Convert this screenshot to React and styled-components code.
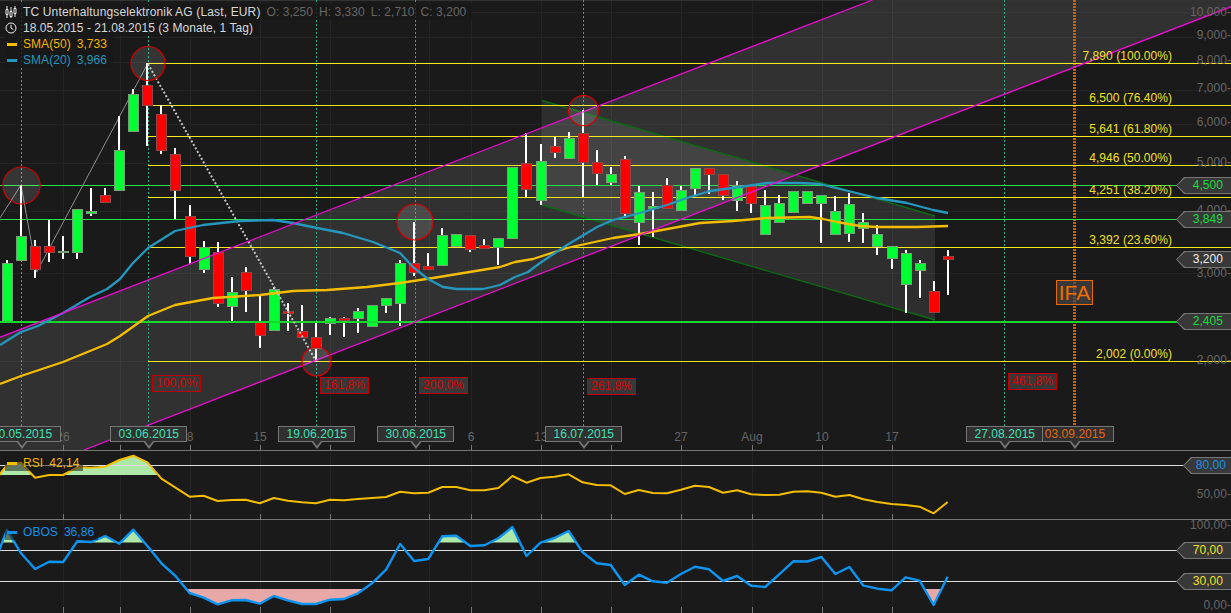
import styled, { createGlobalStyle } from "styled-components";

const GlobalStyle = createGlobalStyle`
  html, body {
    margin: 0;
    padding: 0;
    background: #1a1a1a;
  }
`;

const Chart = styled.div`
  width: 1231px;
  height: 613px;
  display: flex;
  flex-direction: column;
  overflow: hidden;
  background: #1a1a1a;
  font-family: "Liberation Sans", Arial, sans-serif;
  font-size: 12px;
  letter-spacing: 0.05px;
`;

const Pane = styled.section`
  position: relative;
  flex: none;
  box-sizing: border-box;
  height: ${(p) => p.$height}px;
  border-bottom: ${(p) => (p.$last ? "none" : "1px solid #777")};
`;

const PaneSvg = styled.svg`
  display: block;
`;

const Band = styled.polygon`
  fill: rgba(255, 255, 255, ${(p) => p.$alpha});
`;

const Rule = styled.line`
  stroke: ${(p) => p.$color};
  stroke-width: ${(p) => p.$width || 1}px;
  shape-rendering: crispEdges;
`;

const Stripe = styled.line`
  stroke: ${(p) => p.$color};
  stroke-width: ${(p) => p.$width}px;
  stroke-dasharray: ${(p) => p.$dash};
  shape-rendering: crispEdges;
`;

const Trend = styled.polyline`
  fill: none;
  stroke: ${(p) => p.$color};
  stroke-width: ${(p) => p.$width}px;
  stroke-linejoin: round;
  stroke-dasharray: ${(p) => p.$dash || "none"};
`;

const Marker = styled.circle`
  fill: rgba(255, 255, 255, 0.12);
  stroke: #d40000;
  stroke-width: 1.2;
`;

const Wick = styled.line`
  stroke: #fff;
  stroke-width: 2px;
  shape-rendering: crispEdges;
`;

const Body = styled.rect`
  fill: ${(p) => (p.$up ? "#00ff33" : "#ff0000")};
  stroke: ${(p) => (p.$up ? "#76a076" : "#8f4646")};
  stroke-width: 1px;
  shape-rendering: crispEdges;
`;

const Legend = styled.div`
  position: absolute;
  left: 5px;
  top: 4px;
  display: flex;
  flex-direction: column;
  align-items: flex-start;
`;

const LegendRow = styled.div`
  display: flex;
  align-items: center;
  height: 16px;
  gap: 6px;
  padding-right: 6px;
  background: rgba(24, 24, 24, 0.8);
  color: ${(p) => p.$color || "#d8d8d8"};
  white-space: nowrap;
`;

const LegendIcon = styled.svg`
  flex: none;
  width: 12px;
  height: 12px;
`;

const Swatch = styled.i`
  flex: none;
  width: 10px;
  height: 3px;
  margin: 0 0 0 2px;
  background: ${(p) => p.$color};
`;

const Title = styled.span`
  letter-spacing: 0.15px;
`;

const Ohlc = styled.span`
  color: #666;
`;

const PaneLegend = styled(LegendRow)`
  position: absolute;
  left: 5px;
  top: 4px;
  background: rgba(26, 26, 26, 0.55);
  padding-right: 4px;
  gap: 6px;
`;

const AxisLabel = styled.span`
  position: absolute;
  right: 0;
  top: ${(p) => p.$y}px;
  transform: translateY(-50%);
  color: #666;
  line-height: 14px;
`;

const TimeLabel = styled.span`
  position: absolute;
  left: ${(p) => p.$x}px;
  top: 430px;
  transform: translateX(-50%);
  color: #666;
  line-height: 14px;
`;

const FibLabel = styled.span`
  position: absolute;
  right: 59px;
  top: ${(p) => p.$y}px;
  transform: translateY(-50%);
  color: #f0e020;
  line-height: 14px;
  white-space: nowrap;
`;

const DateTag = styled.div`
  position: absolute;
  left: ${(p) => p.$x - 38}px;
  top: 426px;
  box-sizing: border-box;
  width: 77px;
  height: 16px;
  line-height: 14px;
  text-align: center;
  white-space: nowrap;
  border: 1px solid #777;
  background: #303030;
  color: ${(p) => p.$color};

  &::before,
  &::after {
    content: "";
    position: absolute;
    left: 50%;
    width: 0;
    height: 0;
    border-style: solid;
    border-color: transparent;
    border-bottom-width: 0;
  }
  &::before {
    top: 100%;
    margin-left: -6px;
    border-width: 8px 6px 0;
    border-top-color: #777;
  }
  &::after {
    top: 100%;
    margin-left: -4px;
    border-width: 5px 4px 0;
    border-top-color: #2c2c2c;
  }
`;

const ValueTag = styled.div`
  position: absolute;
  right: 0;
  top: ${(p) => p.$y - 8}px;
  box-sizing: border-box;
  width: ${(p) => p.$width}px;
  height: 17px;
  padding-right: ${(p) => p.$pad || 8}px;
  line-height: 17px;
  text-align: right;
  color: ${(p) => p.$color};
  background: #777;
  clip-path: polygon(8px 0, 100% 0, 100% 100%, 8px 100%, 0 50%);

  &::before {
    content: "";
    position: absolute;
    inset: 1px 0 1px 1px;
    background: #383838;
    clip-path: polygon(8px 0, 100% 0, 100% 100%, 8px 100%, 0 50%);
  }
`;

const ValueText = styled.span`
  position: relative;
`;

const PercentTag = styled.div`
  position: absolute;
  left: ${(p) => p.$x}px;
  top: ${(p) => p.$y}px;
  box-sizing: border-box;
  width: 49px;
  height: 17px;
  line-height: 14px;
  text-align: center;
  border: 1px solid #c00000;
  background: #383838;
  color: #dd0000;
`;

const IfaTag = styled.div`
  position: absolute;
  left: 1056px;
  top: 280px;
  box-sizing: border-box;
  width: 37px;
  height: 25px;
  line-height: 23px;
  text-align: center;
  border: 1px solid #e86a00;
  background: rgba(70, 70, 70, 0.7);
  color: #ee6e00;
  font-size: 21px;
  letter-spacing: 0;
`;

const WIDTH = 1231;
const barX = (i) => Math.round(7 + 14.04 * i);

const candles = [
  [260, 322, 263, 322, 1], [185, 260, 236, 260, 1], [240, 278, 246, 269, 0], [220, 262, 246, 252, 0],
  [236, 259, 251, 252, 1], [209, 259, 209, 252, 1], [188, 216, 211, 213, 1], [188, 203, 195, 202, 0],
  [116, 190, 150, 190, 1], [89, 131, 94, 131, 1], [63, 146, 85, 105, 0], [105, 154, 114, 150, 0],
  [148, 219, 154, 190, 0], [205, 264, 216, 256, 0], [241, 273, 247, 269, 1], [242, 307, 252, 303, 0],
  [277, 321, 292, 306, 1], [267, 312, 272, 290, 0], [296, 348, 322, 335, 0], [287, 330, 289, 330, 1],
  [303, 331, 311, 313, 0], [305, 337, 331, 337, 0], [322, 362, 337, 348, 0], [317, 335, 318, 323, 1],
  [317, 337, 318, 320, 0], [308, 333, 311, 318, 1], [305, 326, 305, 326, 1], [298, 313, 298, 305, 1],
  [260, 326, 263, 303, 1], [222, 276, 263, 272, 0], [253, 269, 266, 269, 0], [228, 265, 235, 265, 1],
  [234, 246, 234, 246, 1], [235, 252, 235, 249, 0], [239, 248, 245, 248, 0], [238, 265, 238, 247, 1],
  [167, 238, 167, 238, 1], [133, 197, 163, 189, 0], [144, 205, 161, 200, 1], [137, 158, 146, 152, 0],
  [132, 158, 138, 158, 1], [110, 197, 133, 162, 0], [150, 185, 162, 173, 0], [167, 185, 174, 182, 1],
  [156, 216, 159, 213, 0], [186, 245, 192, 222, 1], [192, 237, 206, 208, 1], [178, 208, 185, 208, 0],
  [186, 210, 190, 210, 1], [168, 195, 168, 188, 1], [168, 194, 168, 174, 0], [174, 200, 174, 195, 0],
  [181, 211, 185, 200, 1], [186, 213, 186, 203, 0], [190, 234, 205, 234, 1], [195, 222, 203, 222, 1],
  [191, 212, 191, 212, 1], [191, 203, 191, 203, 1], [195, 243, 195, 203, 1], [196, 234, 211, 234, 1],
  [193, 242, 204, 233, 1], [213, 243, 222, 228, 1], [225, 255, 234, 246, 1], [246, 269, 246, 258, 1],
  [250, 313, 253, 284, 1], [260, 298, 263, 270, 1], [281, 312, 291, 312, 0], [250, 295, 256, 259, 0],
];

const sma50 = "0,384 21,376 63,362 107,344 120,336 148,316 175,305 213,298 260,295 293,291 327,290 367,287 400,283 433,278 500,267 515,262 533,259 567,248 613,238 640,234 700,223 733,221 767,218 810,217 823,219 837,222 860,226 877,227 917,227 948,226";
const sma20 = "0,345 21,332 38,326 63,313 90,297 107,289 120,279 133,263 148,248 175,231 203,225 240,221 273,220 293,223 317,228 343,233 373,242 400,253 413,267 428,279 443,287 457,289 483,289 500,285 515,277 528,272 540,263 567,245 597,227 613,220 640,213 667,205 687,198 710,191 740,187 767,183 800,183 820,184 840,189 877,198 907,203 933,210 948,213";

const rsi = [
  465, 462.7, 477.7, 475, 475, 467.3, 467.7, 466.7, 460, 455.7, 462.3, 478.7, 487.7, 496.7, 495.7, 501, 500,
  499.7, 503.3, 498, 500.7, 502.3, 503.3, 499.7, 500.3, 499, 498, 497, 491.7, 493.3, 492.7, 487, 487, 490.3,
  490.3, 488, 476, 482.7, 478, 476.7, 474.3, 482.3, 485, 485.3, 494, 490, 493, 493.3, 489.7, 485.7, 487, 492.7,
  490.3, 494.3, 495, 494.7, 491.7, 491.3, 492.7, 496.7, 495, 499.3, 502, 504, 505, 506.7, 513.3, 502,
];

const obos = [
  530, 553.3, 569, 561.7, 562, 541.3, 542, 536, 543.7, 529.7, 546, 563.3, 576, 593, 597.7, 604.3, 600.3, 600,
  603.7, 596, 600.3, 604, 604, 599.7, 599, 593.3, 583.3, 569.7, 544, 561, 559, 536.3, 535.7, 546, 545.3, 538.3,
  527, 556, 542.7, 538, 531, 552.3, 563.3, 565, 585, 574.7, 581.3, 582.7, 574, 566.7, 569.3, 581, 576, 585.7,
  587, 574.3, 561.3, 561.5, 557, 574, 567, 585.7, 588.7, 590.3, 577.3, 580.7, 605, 576.7,
];

const seriesPoints = (first, values) =>
  [`-7,${first}`, ...values.map((v, i) => `${7 + 14.04 * i},${v}`)].join(" ");

const ticks = [63.5, 120.5, 190.5, 260.5, 330.5, 429.5, 471.5, 541.5, 611.5, 681.5, 752.5, 822.5, 892.5];
const fibRows = [
  [63.5, "7,890 (100.00%)", 56], [105.5, "6,500 (76.40%)", 98], [136.5, "5,641 (61.80%)", 129],
  [165.5, "4,946 (50.00%)", 158], [197.5, "4,251 (38.20%)", 190], [247.5, "3,392 (23.60%)", 240],
  [361.5, "2,002 (0.00%)", 354],
];
const priceLabels = [
  ["10,000-", 12], ["9,000-", 35], ["8,000-", 60], ["7,000-", 88], ["6,000-", 122], ["5,000-", 162],
  ["4,000-", 210], ["3,000-", 273], ["2,000-", 360],
];
const timeLabels = [["26", 63], ["8", 190], ["15", 260], ["6", 471], ["13", 541], ["27", 681], ["Aug", 752], ["10", 822], ["17", 892]];
const percentTags = [
  ["100,0%", 152, 375], ["161,8%", 320, 377], ["200,0%", 419, 377], ["261,8%", 587, 378], ["461,8%", 1008, 373],
];
const dateLines = [21.5, 148.5, 316.5, 415.5, 583.5, 1004.5];
const markers = [[21.5, 185.5, 18.5], [148, 63.5, 17], [316.5, 361.5, 14.5], [415, 222, 18], [583.5, 110.7, 15]];

function CandleIcon() {
  return (
    <LegendIcon viewBox="0 0 12 12">
      <path d="M2 0v12M6 1v11M10 0v11" stroke="#eee" strokeWidth="1" />
      <path d="M1 3.5h2v5H1zM5 5.5h2v5H5zM9 2.5h2v5H9z" fill="#1a1a1a" stroke="#eee" strokeWidth="1" />
    </LegendIcon>
  );
}

function ClockIcon() {
  return (
    <LegendIcon viewBox="0 0 12 12">
      <circle cx="6" cy="6" r="5" fill="none" stroke="#eee" strokeWidth="1" />
      <path d="M6 2.8V6l2.4 1.6" fill="none" stroke="#eee" strokeWidth="1" />
    </LegendIcon>
  );
}

function Grid({ top, height }) {
  return ticks.map((x) => <Rule key={x} x1={x} x2={x} y1={top} y2={top + height} $color="#242424" />);
}

function Ticks({ y, size }) {
  return ticks.map((x) => <Rule key={x} x1={x} x2={x} y1={y - size} y2={y} $color="#777" />);
}

function PriceCandles() {
  return candles.map(([wickTop, wickBottom, bodyTop, bodyBottom, up], i) => {
    const x = barX(i);
    return (
      <g key={i}>
        <Wick x1={x} x2={x} y1={wickTop} y2={wickBottom} />
        <Body x={x - 5} y={Math.round(bodyTop) + 0.5} width={10} height={Math.max(1, bodyBottom - bodyTop)} $up={up} />
      </g>
    );
  });
}

function PricePane() {
  return (
    <Pane $height={451}>
      <PaneSvg width={WIDTH} height={450} viewBox="0 0 1231 450">
        {[12.5, 37.5, 62.5, 90.5, 124.5, 163.5, 211.5, 273.5, 361.5].map((y) => (
          <Rule key={y} x1="0" x2={WIDTH} y1={y} y2={y} $color="#242424" />
        ))}
        <Grid top={0} height={450} />
        <Band points="0,337.3 872.5,0 1231,0 1231,6.7 84,450 0,450" $alpha={0.1} />
        <Band points="542,100.5 935,216 935,320 542,205" $alpha={0.09} />
        <Rule x1="0" x2={WIDTH} y1="0.5" y2="0.5" $color="#333" />
        {dateLines.map((x) => (
          <Stripe key={x} x1={x} x2={x} y1="0" y2="426" $color="#26ad8a" $width={1} $dash="2 2" />
        ))}
        <Stripe x1="1074.5" x2="1074.5" y1="0" y2="438" $color="#c8600f" $width={3} $dash="2 1" />
        <Trend points="542,100.5 935,216" $color="#0b6a14" $width={1.4} />
        <Trend points="542,205 935,320" $color="#0b6a14" $width={1.4} />
        {fibRows.map(([y]) => (
          <Rule key={y} x1="148" x2={WIDTH} y1={y} y2={y} $color="#ffe81c" />
        ))}
        <Rule x1="0" x2="1178" y1="185.5" y2="185.5" $color="#26e04a" />
        <Rule x1="0" x2="1178" y1="219.5" y2="219.5" $color="#26e04a" />
        <Trend points="0,218 21,185 36.7,272 148,63" $color="#8c8c8c" $width={1} />
        <PriceCandles />
        <Rule x1="0" x2="1178" y1="321.5" y2="321.5" $color="#18d830" $width={2} />
        <Trend points="148,64 316,361" $color="#c4c4c4" $width={2} $dash="2 2" />
        <Trend points={sma50} $color="#f5bd00" $width={2.3} />
        <Trend points={sma20} $color="#2596be" $width={2.3} />
        <Trend points="0,337.3 872.5,0" $color="#e80cd0" $width={1.3} />
        <Trend points="84,450 1231,6.7" $color="#e80cd0" $width={1.3} />
        {markers.map(([cx, cy, r]) => (
          <Marker key={cx} cx={cx} cy={cy} r={r} />
        ))}
        <Ticks y={450} size={5} />
      </PaneSvg>

      <Legend>
        <LegendRow>
          <CandleIcon />
          <Title>TC Unterhaltungselektronik AG (Last, EUR)</Title>
          <Ohlc>O: 3,250</Ohlc>
          <Ohlc>H: 3,330</Ohlc>
          <Ohlc>L: 2,710</Ohlc>
          <Ohlc>C: 3,200</Ohlc>
        </LegendRow>
        <LegendRow>
          <ClockIcon />
          <span>18.05.2015 - 21.08.2015 (3 Monate, 1 Tag)</span>
        </LegendRow>
        <LegendRow $color="#f0b400">
          <Swatch $color="#f5bd00" />
          <span>SMA(50)</span>
          <span>3,733</span>
        </LegendRow>
        <LegendRow $color="#2596be">
          <Swatch $color="#2596be" />
          <span>SMA(20)</span>
          <span>3,966</span>
        </LegendRow>
      </Legend>

      {priceLabels.map(([text, y]) => (
        <AxisLabel key={text} $y={y}>{text}</AxisLabel>
      ))}
      {timeLabels.map(([text, x]) => (
        <TimeLabel key={text} $x={x}>{text}</TimeLabel>
      ))}
      {fibRows.map(([, text, y]) => (
        <FibLabel key={text} $y={y}>{text}</FibLabel>
      ))}
      {percentTags.map(([text, x, y]) => (
        <PercentTag key={text} $x={x} $y={y}>{text}</PercentTag>
      ))}
      <IfaTag>IFA</IfaTag>

      <DateTag $x={21.5} $color="#3fe0b4">20.05.2015</DateTag>
      <DateTag $x={148.3} $color="#3fe0b4">03.06.2015</DateTag>
      <DateTag $x={316.3} $color="#3fe0b4">19.06.2015</DateTag>
      <DateTag $x={415.3} $color="#3fe0b4">30.06.2015</DateTag>
      <DateTag $x={583.3} $color="#3fe0b4">16.07.2015</DateTag>
      <DateTag $x={1074.5} $color="#e0680f">03.09.2015</DateTag>
      <DateTag $x={1004.3} $color="#3fe0b4">27.08.2015</DateTag>

      <ValueTag $y={185} $width={55} $color="#16dd3c"><ValueText>4,500</ValueText></ValueTag>
      <ValueTag $y={219} $width={55} $color="#16dd3c"><ValueText>3,849</ValueText></ValueTag>
      <ValueTag $y={259} $width={55} $color="#eee"><ValueText>3,200</ValueText></ValueTag>
      <ValueTag $y={321} $width={55} $color="#16dd3c"><ValueText>2,405</ValueText></ValueTag>
    </Pane>
  );
}

function RsiPane() {
  return (
    <Pane $height={69}>
      <PaneSvg width={WIDTH} height={68} viewBox="0 451 1231 68">
        <defs>
          <clipPath id="rsi-high">
            <rect x="0" y="451" width={WIDTH} height="24" />
          </clipPath>
        </defs>
        <Grid top={451} height={68} />
        <polygon points={`${seriesPoints(483, rsi)} 948,520 -7,520`} fill="#aee8a8" clipPath="url(#rsi-high)" />
        <Rule x1="0" x2={WIDTH} y1="465.5" y2="465.5" $color="#ddd" />
        <Trend points={seriesPoints(483, rsi)} $color="#f5bd00" $width={2} />
        <Ticks y={519} size={5} />
      </PaneSvg>
      <PaneLegend $color="#f0b400">
        <Swatch $color="#f5bd00" />
        <span>RSI</span>
        <span>42,14</span>
      </PaneLegend>
      <AxisLabel $y={43}>50,00-</AxisLabel>
      <ValueTag $y={14} $width={48} $pad={5} $color="#1490e8"><ValueText>80,00</ValueText></ValueTag>
    </Pane>
  );
}

function ObosPane() {
  return (
    <Pane $height={93} $last>
      <PaneSvg width={WIDTH} height={93} viewBox="0 520 1231 93">
        <defs>
          <clipPath id="obos-high">
            <rect x="0" y="520" width={WIDTH} height="22.5" />
          </clipPath>
          <clipPath id="obos-low">
            <rect x="0" y="589" width={WIDTH} height="24" />
          </clipPath>
        </defs>
        <Grid top={520} height={93} />
        <polygon points={`${seriesPoints(566, obos)} 948,640 -7,640`} fill="#aee8a8" clipPath="url(#obos-high)" />
        <polygon points={`${seriesPoints(566, obos)} 948,500 -7,500`} fill="#e8a8a8" clipPath="url(#obos-low)" />
        <Rule x1="0" x2={WIDTH} y1="550.5" y2="550.5" $color="#ddd" />
        <Rule x1="0" x2={WIDTH} y1="581.5" y2="581.5" $color="#ddd" />
        <Trend points={seriesPoints(566, obos)} $color="#0d94f0" $width={2.4} />
        <Ticks y={613} size={6} />
      </PaneSvg>
      <PaneLegend $color="#1490e8">
        <Swatch $color="#1490e8" />
        <span>OBOS</span>
        <span>36,86</span>
      </PaneLegend>
      <AxisLabel $y={5}>100,00-</AxisLabel>
      <AxisLabel $y={85}>0,00-</AxisLabel>
      <ValueTag $y={30} $width={55} $color="#f0e020"><ValueText>70,00</ValueText></ValueTag>
      <ValueTag $y={61} $width={55} $color="#f0e020"><ValueText>30,00</ValueText></ValueTag>
    </Pane>
  );
}

export default function App() {
  return (
    <>
      <GlobalStyle />
      <Chart>
        <PricePane />
        <RsiPane />
        <ObosPane />
      </Chart>
    </>
  );
}
